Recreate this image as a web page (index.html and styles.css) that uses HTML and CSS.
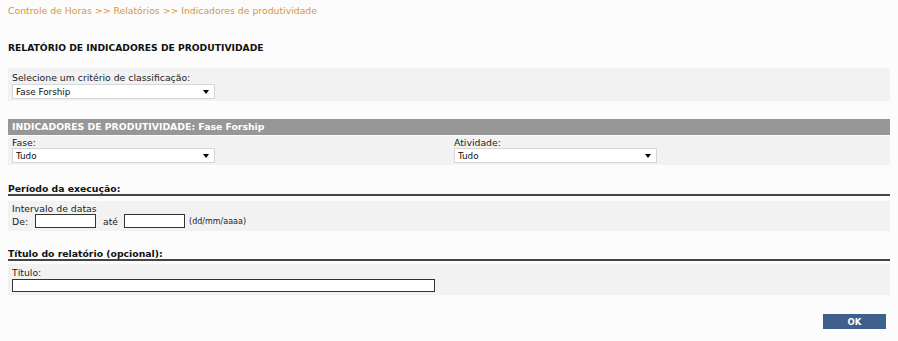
FILE: index.html
```html
<!DOCTYPE html>
<html lang="pt-BR">
<head>
  <meta charset="UTF-8">
  <title>Indicadores de produtividade</title>
  <link rel="stylesheet" href="styles.css">
</head>
<body>

  <div class="breadcrumb">Controle de Horas &gt;&gt; Relatórios &gt;&gt; Indicadores de produtividade</div>

  <h1 class="page-title">RELATÓRIO DE INDICADORES DE PRODUTIVIDADE</h1>

  <div class="panel panel-first">
    <label class="field-label">Selecione um critério de classificação:</label>
    <div class="select-box">
      <select><option>Fase Forship</option></select>
      <span class="arrow"></span>
    </div>
  </div>

  <div class="bar-title">INDICADORES DE PRODUTIVIDADE: Fase Forship</div>
  <div class="panel panel-cols">
    <div class="col col-left">
      <label class="field-label">Fase:</label>
      <div class="select-box">
        <select><option>Tudo</option></select>
        <span class="arrow"></span>
      </div>
    </div>
    <div class="col">
      <label class="field-label">Atividade:</label>
      <div class="select-box">
        <select><option>Tudo</option></select>
        <span class="arrow"></span>
      </div>
    </div>
  </div>

  <h2 class="section-title">Período da execução:</h2>
  <div class="panel panel-dates">
    <div class="field-label">Intervalo de datas</div>
    <div class="date-row">
      <span class="de">De:</span>
      <input type="text" class="date-input">
      <span class="ate">até</span>
      <input type="text" class="date-input">
      <span class="hint">(dd/mm/aaaa)</span>
    </div>
  </div>

  <h2 class="section-title section-second">Título do relatório (opcional):</h2>
  <div class="panel panel-title">
    <label class="field-label">Título:</label>
    <input type="text" class="title-input">
  </div>

  <div class="actions">
    <button class="ok-button">OK</button>
  </div>

</body>
</html>
```

FILE: styles.css
```css
body {
  font-family: 'DejaVu Sans', Verdana, sans-serif;
  font-size: 9.3px;
  background-color: #FCFCFC;
  color: #222;
  margin: 0;
  padding: 0 8px;
  width: 882px;
}

.breadcrumb {
  color: #D8963C;
  padding-top: 5px;
  height: 13px;
}

.page-title {
  font-size: 9.2px;
  font-weight: bold;
  color: #111;
  margin: 24px 0 0 0;
  height: 26px;
}

.panel {
  background-color: #F2F2F2;
  padding: 3px 4px;
}

.panel-first {
  padding: 4px 4px 2px 4px;
  margin-bottom: 18px;
}

.panel-first .field-label {
  line-height: 12px;
}

.field-label {
  display: block;
  line-height: 11px;
  color: #222;
}

.select-box {
  position: relative;
  width: 203px;
  height: 15px;
}

.select-box select {
  appearance: none;
  -webkit-appearance: none;
  display: block;
  width: 100%;
  height: 15px;
  border: 1px solid #D6D6D6;
  background-color: #fff;
  font-family: 'DejaVu Sans', Verdana, sans-serif;
  font-size: 8.8px;
  color: #111;
  padding: 0 3px;
  border-radius: 0;
}

.arrow {
  position: absolute;
  right: 6px;
  top: 6px;
  border-left: 3.5px solid transparent;
  border-right: 3.5px solid transparent;
  border-top: 4px solid #000;
}

.bar-title {
  background-color: #979797;
  color: #fff;
  font-weight: bold;
  height: 16px;
  line-height: 16px;
  padding-left: 4px;
  border-bottom: 1px solid #fff;
}

.panel-cols {
  display: flex;
  padding: 1px 4px 2px 4px;
}

.col-left {
  flex: 0 0 442px;
}

.section-title {
  font-size: 9.3px;
  font-weight: bold;
  color: #111;
  margin: 18px 0 5px 0;
  border-bottom: 2px solid #444;
  line-height: 11px;
}

.section-second {
  margin: 17px 0 3px 0;
}

.panel-dates .field-label {
  line-height: 10px;
}

.date-row {
  display: flex;
  align-items: center;
}

.de {
  width: 23px;
}

.date-input {
  width: 59px;
  height: 12px;
  border: 1px solid #333;
  margin: 0 7px 0 0;
  padding: 0;
}

.ate {
  margin-right: 6px;
}

.date-row .date-input:nth-of-type(2) {
  margin-right: 4px;
}

.hint {
  font-size: 8px;
}

.title-input {
  display: block;
  width: 421px;
  height: 11px;
  border: 1px solid #333;
  padding: 0;
  margin-top: 1px;
}

.actions {
  display: flex;
  justify-content: flex-end;
  padding: 19px 4px 0 0;
}

.ok-button {
  width: 63px;
  height: 15px;
  background-color: #3F5F8E;
  color: #fff;
  border: none;
  font-family: 'DejaVu Sans', Verdana, sans-serif;
  font-size: 8.5px;
  font-weight: bold;
  padding: 0;
}
```
